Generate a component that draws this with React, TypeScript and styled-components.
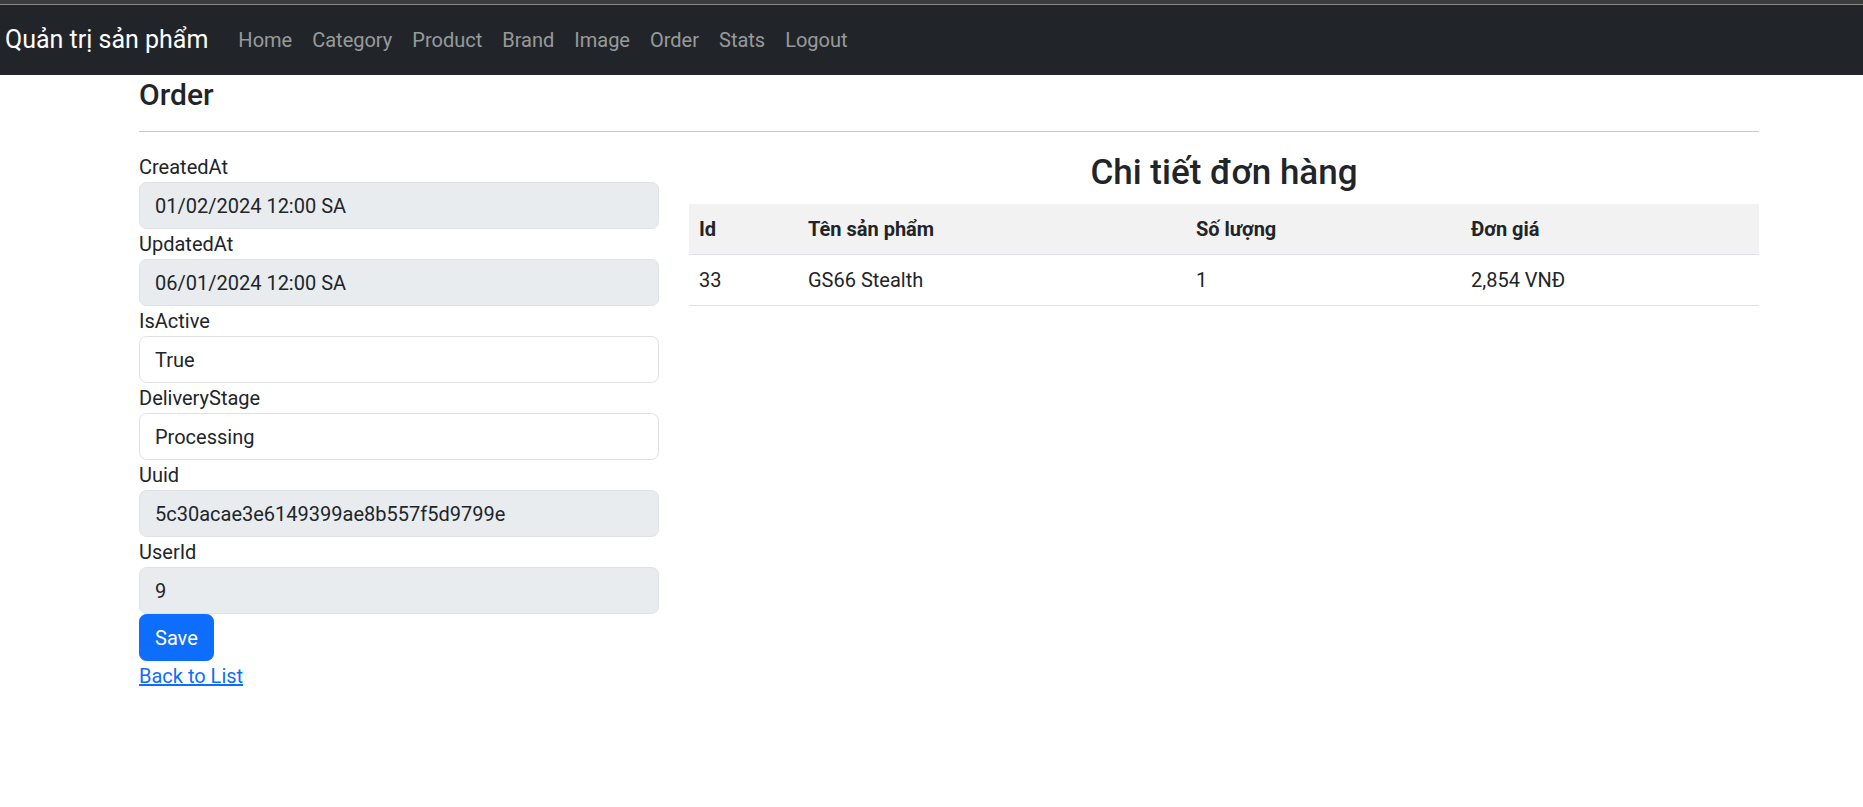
import React from "react";
import styled, { createGlobalStyle } from "styled-components";

const GlobalStyle = createGlobalStyle`
  * { box-sizing: border-box; }
  body {
    margin: 0;
    font-family: "Segoe UI", Roboto, "Noto Sans", "Liberation Sans", sans-serif;
    font-size: 20px;
    line-height: 1.5;
    color: #212529;
    background: #ffffff;
  }
`;

const TopStrip = styled.div`
  height: 5px;
  background: #3b3b3b;
  border-bottom: 1px solid #8a8a8a;
`;

const Navbar = styled.nav`
  height: 70px;
  background: #212529;
  display: flex;
  align-items: center;
  padding-left: 5px;
`;

const Brand = styled.a`
  font-size: 25px;
  color: #ffffff;
  text-decoration: none;
  margin-right: 20px;
  white-space: nowrap;
`;

const NavList = styled.ul`
  display: flex;
  list-style: none;
  margin: 0;
  padding: 0;
`;

const NavLink = styled.a`
  display: block;
  padding: 10px;
  color: rgba(255, 255, 255, 0.55);
  text-decoration: none;
  font-size: 20px;
`;

const Main = styled.main`
  width: 1759px;
  padding-left: 139px;
`;

const PageTitle = styled.h4`
  margin: 2px 0 18px;
  font-size: 30px;
  font-weight: 500;
  line-height: 1.2;
`;

const Divider = styled.hr`
  margin: 0 0 20px;
  border: 0;
  border-top: 1px solid #c8c8c8;
`;

const Columns = styled.div`
  display: grid;
  grid-template-columns: 520px 1070px;
  column-gap: 30px;
  align-items: start;
`;

const Form = styled.form`
  display: flex;
  flex-direction: column;
`;

const Label = styled.label`
  display: block;
  height: 30px;
`;

const Input = styled.input<{ $disabled?: boolean }>`
  display: block;
  width: 100%;
  height: 47px;
  padding: 0 15px;
  font: inherit;
  color: #212529;
  background: ${(p) => (p.$disabled ? "#e9ecef" : "#ffffff")};
  border: 1px solid #dee2e6;
  border-radius: 7.5px;
  outline: none;
`;

const SaveButton = styled.button`
  align-self: flex-start;
  height: 47px;
  padding: 0 15px;
  font: inherit;
  color: #ffffff;
  background: #0d6efd;
  border: 1px solid #0d6efd;
  border-radius: 7.5px;
  cursor: pointer;
`;

const BackLink = styled.a`
  align-self: flex-start;
  color: #0d6efd;
  text-decoration: underline;
`;

const Details = styled.section`
  display: flex;
  flex-direction: column;
`;

const DetailsTitle = styled.h3`
  margin: 0 0 10px;
  text-align: center;
  font-size: 35px;
  font-weight: 500;
  line-height: 1.2;
`;

const Table = styled.table`
  width: 100%;
  border-collapse: collapse;
  table-layout: fixed;
`;

const HeadCell = styled.th<{ $w: number }>`
  width: ${(p) => p.$w}px;
  padding: 10px;
  text-align: left;
  font-weight: 700;
  background: #f2f2f2;
  border-bottom: 1px solid #dee2e6;
`;

const Cell = styled.td`
  padding: 10px;
  border-bottom: 1px solid #dee2e6;
`;

const fields = [
  { label: "CreatedAt", value: "01/02/2024 12:00 SA", disabled: true },
  { label: "UpdatedAt", value: "06/01/2024 12:00 SA", disabled: true },
  { label: "IsActive", value: "True", disabled: false },
  { label: "DeliveryStage", value: "Processing", disabled: false },
  { label: "Uuid", value: "5c30acae3e6149399ae8b557f5d9799e", disabled: true },
  { label: "UserId", value: "9", disabled: true },
];

const navItems = ["Home", "Category", "Product", "Brand", "Image", "Order", "Stats", "Logout"];

const columns = [
  { title: "Id", w: 109 },
  { title: "Tên sản phẩm", w: 388 },
  { title: "Số lượng", w: 275 },
  { title: "Đơn giá", w: 298 },
];

export default function App() {
  return (
    <>
      <GlobalStyle />
      <TopStrip />
      <Navbar>
        <Brand href="#">Quản trị sản phẩm</Brand>
        <NavList>
          {navItems.map((n) => (
            <li key={n}>
              <NavLink href="#">{n}</NavLink>
            </li>
          ))}
        </NavList>
      </Navbar>
      <Main>
        <PageTitle>Order</PageTitle>
        <Divider />
        <Columns>
          <Form onSubmit={(e) => e.preventDefault()}>
            {fields.map((f) => (
              <React.Fragment key={f.label}>
                <Label>{f.label}</Label>
                <Input
                  defaultValue={f.value}
                  readOnly={f.disabled}
                  $disabled={f.disabled}
                />
              </React.Fragment>
            ))}
            <SaveButton type="submit">Save</SaveButton>
            <BackLink href="#">Back to List</BackLink>
          </Form>
          <Details>
            <DetailsTitle>Chi tiết đơn hàng</DetailsTitle>
            <Table>
              <thead>
                <tr>
                  {columns.map((c) => (
                    <HeadCell key={c.title} $w={c.w}>
                      {c.title}
                    </HeadCell>
                  ))}
                </tr>
              </thead>
              <tbody>
                <tr>
                  <Cell>33</Cell>
                  <Cell>GS66 Stealth</Cell>
                  <Cell>1</Cell>
                  <Cell>2,854 VNĐ</Cell>
                </tr>
              </tbody>
            </Table>
          </Details>
        </Columns>
      </Main>
    </>
  );
}
